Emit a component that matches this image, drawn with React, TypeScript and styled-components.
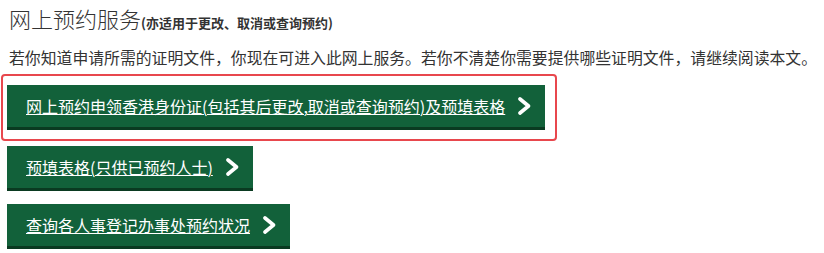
import React from 'react';
import styled, { createGlobalStyle } from 'styled-components';

const GlobalStyle = createGlobalStyle`
  html, body {
    margin: 0;
    padding: 0;
    background: #ffffff;
  }

  body {
    font-family: "Noto Sans CJK SC", "Noto Sans", sans-serif;
    color: #333333;
  }
`;

const Page = styled.div`
  display: flex;
  flex-direction: column;
  align-items: flex-start;
  padding-top: 4px;
  width: 824px;
  height: 253px;
  box-sizing: border-box;
`;

const Heading = styled.h2`
  margin: 0;
  padding-left: 9px;
  font-size: 22px;
  font-weight: 300;
  line-height: 28px;
  color: #333333;
  white-space: nowrap;
`;

const Note = styled.span`
  font-size: 13px;
  font-weight: 700;
  color: #333333;
`;

const Intro = styled.p`
  margin: 9px 0 0;
  padding-left: 9px;
  font-size: 15.85px;
  line-height: 24px;
  color: #333333;
  white-space: nowrap;
`;

const Highlight = styled.div`
  margin: 4px 0 0 1px;
  padding: 9px 10px 9px 4px;
  border: 2px solid #e8474d;
  border-radius: 4px;
`;

const LinkButton = styled.a<{ $gap?: number }>`
  display: flex;
  align-items: center;
  gap: 13px;
  box-sizing: border-box;
  height: 45px;
  width: fit-content;
  padding: 0 14px 0 19px;
  margin-top: ${(p) => p.$gap ?? 0}px;
  margin-left: ${(p) => (p.$gap === undefined ? 0 : 7)}px;
  background: #12613a;
  border-bottom: 3px solid #0a3a21;
  color: #ffffff;
  text-decoration: none;
  cursor: pointer;
`;

const Label = styled.span`
  font-size: 16px;
  line-height: 20px;
  text-decoration: underline;
  text-decoration-thickness: 1px;
  text-underline-offset: 1px;
  white-space: nowrap;
`;

function Chevron () {
  return (
    <svg width='13' height='18' viewBox='0 0 13 18' aria-hidden='true'>
      <polyline
        points='2,2 10.5,9 2,16'
        fill='none'
        stroke='#ffffff'
        strokeWidth='3.6'
        strokeLinecap='round'
        strokeLinejoin='round'
      />
    </svg>
  );
}

const links = [
  '预填表格(只供已预约人士)',
  '查询各人事登记办事处预约状况'
];

export default function App () {
  return (
    <>
      <GlobalStyle />
      <Page>
        <Heading>
          网上预约服务<Note>(亦适用于更改、取消或查询预约)</Note>
        </Heading>
        <Intro>
          若你知道申请所需的证明文件，你现在可进入此网上服务。若你不清楚你需要提供哪些证明文件，请继续阅读本文。
        </Intro>
        <Highlight>
          <LinkButton>
            <Label>网上预约申领香港身份证(包括其后更改,取消或查询预约)及预填表格</Label>
            <Chevron />
          </LinkButton>
        </Highlight>
        {links.map((text, i) => (
          <LinkButton key={text} $gap={i === 0 ? 5 : 13}>
            <Label>{text}</Label>
            <Chevron />
          </LinkButton>
        ))}
      </Page>
    </>
  );
}
